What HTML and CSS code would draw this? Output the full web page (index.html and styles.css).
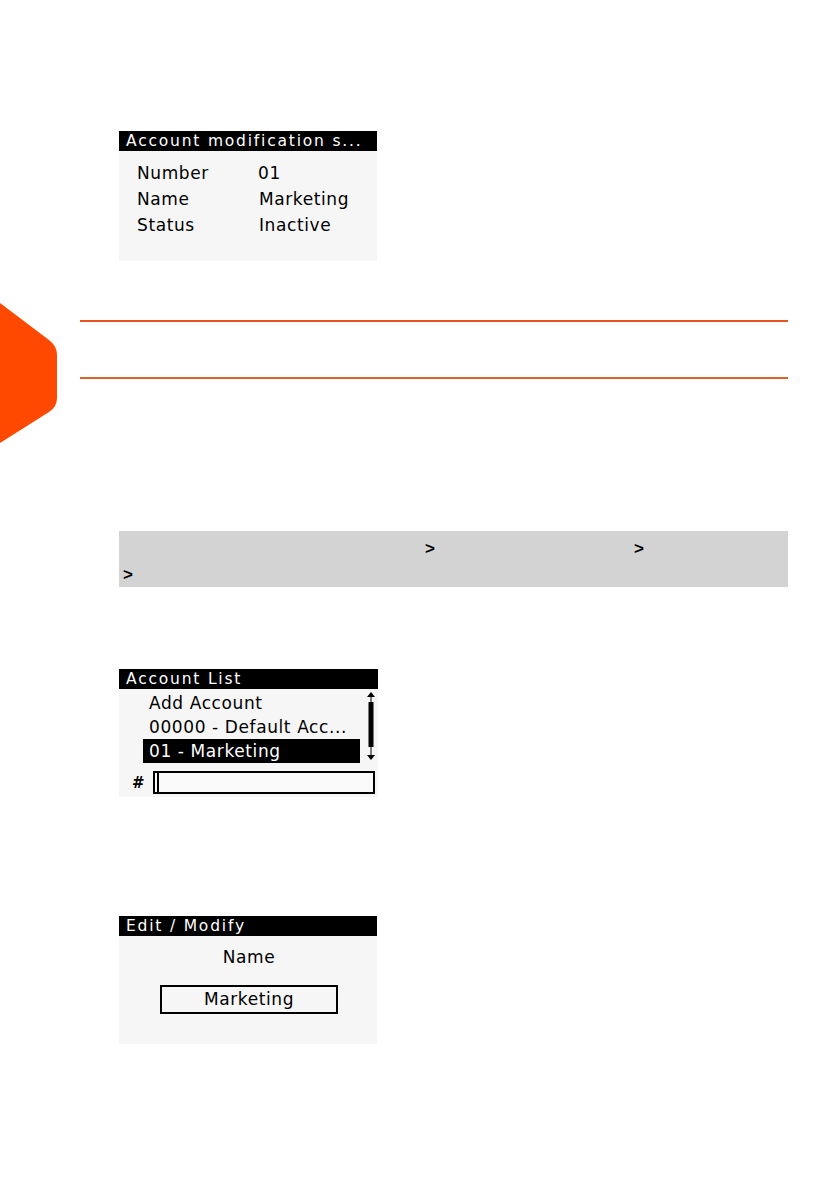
FILE: index.html
```html
<!DOCTYPE html>
<html lang="en">
<head>
<meta charset="utf-8">
<title>Account modification</title>
<link rel="stylesheet" href="styles.css">
</head>
<body>
<div class="page">
  <svg class="tab" width="58" height="145" viewBox="0 0 58 145" aria-hidden="true">
    <path d="M0 3 L49 40 Q57 46 57 55 L57 98 Q57 107 49 112 L0 143 Z" fill="#ff4800"/>
  </svg>

  <div class="lcd lcd-summary">
    <div class="lcd-title">Account modification s...</div>
    <div class="lcd-body summary-body">
      <span>Number</span><span>01</span>
      <span>Name</span><span class="val">Marketing</span>
      <span>Status</span><span class="val">Inactive</span>
    </div>
  </div>

  <div class="rule-box"></div>

  <div class="path-bar">
    <div class="path-row row-one"><span class="chev chev-a">&gt;</span><span class="chev chev-b">&gt;</span></div>
    <div class="path-row row-two"><span class="chev">&gt;</span></div>
  </div>

  <div class="lcd lcd-list">
    <div class="lcd-title">Account List</div>
    <div class="lcd-body list-body">
      <div class="list-area">
        <div class="list">
          <div class="item">Add Account</div>
          <div class="item">00000 - Default Acc...</div>
          <div class="item selected">01 - Marketing</div>
        </div>
        <svg class="scroll" width="12" height="72" viewBox="0 0 12 72" aria-hidden="true">
          <path d="M6 1 L10 6 L2 6 Z" fill="#000"/>
          <rect x="5.5" y="6" width="1" height="5" fill="#000"/>
          <rect x="3.5" y="11" width="5" height="45" fill="#000"/>
          <rect x="5.5" y="56" width="1" height="9" fill="#000"/>
          <path d="M2 64 L10 64 L6 69 Z" fill="#000"/>
        </svg>
      </div>
      <div class="input-row">
        <span class="hash">#</span>
        <div class="field"><span class="caret"></span></div>
      </div>
    </div>
  </div>

  <div class="lcd lcd-edit">
    <div class="lcd-title">Edit / Modify</div>
    <div class="lcd-body edit-body">
      <div class="edit-label">Name</div>
      <div class="edit-box">Marketing</div>
    </div>
  </div>
</div>
</body>
</html>
```

FILE: styles.css
```css
html, body {
  margin: 0;
  padding: 0;
  background: #ffffff;
}

.page {
  position: relative;
  width: 839px;
  height: 1191px;
  padding-top: 131px;
  box-sizing: border-box;
  font-family: "DejaVu Sans", "Liberation Sans", sans-serif;
  color: #000;
}

.tab {
  position: absolute;
  left: 0;
  top: 300px;
}

.lcd {
  margin-left: 119px;
  width: 258px;
  background: #f6f6f6;
}

.lcd-title {
  height: 20px;
  line-height: 20px;
  background: #000;
  color: #fff;
  font-size: 15.5px;
  letter-spacing: 1.8px;
  padding-left: 7px;
  white-space: nowrap;
  overflow: hidden;
}

.lcd-body {
  font-size: 17px;
  letter-spacing: 0.6px;
  box-sizing: border-box;
}

.summary-body {
  height: 110px;
  padding: 9px 0 0 18px;
  display: grid;
  grid-template-columns: 121px auto;
  grid-auto-rows: 26px;
  line-height: 26px;
  align-content: start;
}

.summary-body .val {
  margin-left: 1px;
}

.rule-box {
  margin-top: 59px;
  margin-left: 80px;
  width: 708px;
  height: 55px;
  border-top: 2px solid #e8521f;
  border-bottom: 2px solid #dd6328;
}

.path-bar {
  margin-top: 152px;
  margin-left: 119px;
  width: 669px;
  height: 56px;
  background: #d3d3d3;
  box-sizing: border-box;
  padding: 5px 0 0 4px;
  font-family: "Liberation Sans", sans-serif;
  font-weight: bold;
  font-size: 17px;
  line-height: 26px;
}

.path-row {
  display: flex;
  height: 26px;
}

.chev-a {
  margin-left: 302px;
}

.chev-b {
  margin-left: 199px;
}

.lcd-list {
  margin-top: 82px;
  width: 259px;
}

.list-body {
  height: 108px;
  padding-top: 2px;
}

.list-area {
  display: flex;
  align-items: flex-start;
}

.list {
  margin-left: 24px;
  width: 217px;
}

.item {
  height: 24px;
  line-height: 24px;
  padding-left: 6px;
  white-space: nowrap;
}

.item.selected {
  background: #000;
  color: #fff;
}

.scroll {
  margin-left: 5px;
  margin-top: 0;
}

.input-row {
  display: flex;
  align-items: center;
  margin-top: 8px;
  padding-left: 13px;
}

.hash {
  width: 21px;
  font-weight: bold;
  font-size: 15px;
  letter-spacing: 0;
}

.field {
  width: 222px;
  height: 23px;
  border: 2px solid #000;
  box-sizing: border-box;
  background: #f9f9f9;
  display: flex;
}

.caret {
  width: 2px;
  margin-left: 2px;
  background: #000;
}

.lcd-edit {
  margin-top: 119px;
}

.edit-body {
  height: 108px;
  padding-top: 9px;
  display: flex;
  flex-direction: column;
  align-items: center;
}

.edit-label {
  line-height: 24px;
  height: 24px;
  margin-left: 2px;
}

.edit-box {
  margin-top: 16px;
  width: 178px;
  height: 29px;
  border: 2px solid #000;
  box-sizing: border-box;
  text-align: center;
  line-height: 25px;
  margin-left: 2px;
}
```
